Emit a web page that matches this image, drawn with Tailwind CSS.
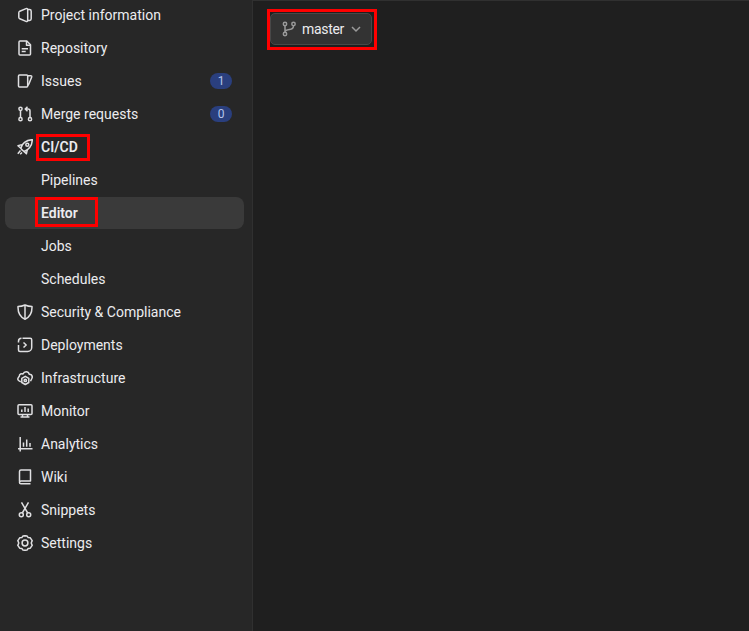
<!doctype html>
<html><head><meta charset="utf-8"><script src="https://cdn.jsdelivr.net/npm/@tailwindcss/browser@4"></script></head>
<body class="m-0 bg-[#1f1f1f]">
<div class="relative flex h-[631px] w-[749px] overflow-hidden bg-[#1f1f1f] font-['Roboto',sans-serif] text-[14px] text-[#ececef]">
<aside class="h-full w-[253px] shrink-0 border-r border-[#303030] bg-[#272727]">
<nav class="-mt-px flex flex-col gap-px pl-[5px] pr-2">
<a class="flex h-8 items-center rounded-lg pl-[12px] pr-3"><svg class="mr-[8px] h-4 w-4 shrink-0" viewBox="0 0 16 16" fill="none" stroke="#e0e0e2" stroke-width="1.5" stroke-linejoin="round"><path d="M2.800 4.200 9 1.600c.9-.4 1.700.2 1.700 1.100v10.600c0 .9-.8 1.500-1.700 1.100l-6.200-2.600c-.6-.3-1-.8-1-1.500V5.700c0-.7.4-1.200 1-1.500Z"/><path d="M10.700 2.500h1.800c1 0 1.700.7 1.700 1.700v7.600c0 1-.7 1.700-1.700 1.700h-1.800"/></svg>Project information</a>
<a class="flex h-8 items-center rounded-lg pl-[12px] pr-3"><svg class="mr-[8px] h-4 w-4 shrink-0" viewBox="0 0 16 16" fill="none" stroke="#e0e0e2" stroke-width="1.5" stroke-linejoin="round"><path d="M3 1h6.800l3.700 3.700V14c0 .6-.4 1-1 1H3c-.6 0-1-.4-1-1V2c0-.6.4-1 1-1Z"/><path d="M9.500 1v4.200h4M4.700 8.700h6.300M4.700 11.500h4"/></svg>Repository</a>
<a class="flex h-8 items-center rounded-lg pl-[12px] pr-3"><svg class="mr-[8px] h-4 w-4 shrink-0" viewBox="0 0 16 16" fill="none" stroke="#e0e0e2" stroke-width="1.5" stroke-linejoin="round"><path d="M2.500 2h7.200c.6 0 1 .4 1 1v10c0 .6-.4 1-1 1H2.500c-.6 0-1-.4-1-1V3c0-.6.4-1 1-1Z"/><path d="M10.700 2.700h3c.7 0 1.200.6 1 1.300L12 10.700l-1.300 1.800"/></svg><span class="grow">Issues</span><span class="flex h-4 w-[22px] items-center justify-center rounded-full bg-[#2a3f7e] text-[12px] leading-none text-[#b5c6ec]">1</span></a>
<a class="flex h-8 items-center rounded-lg pl-[12px] pr-3"><svg class="mr-[8px] h-4 w-4 shrink-0" viewBox="0 0 16 16" fill="none" stroke="#e0e0e2" stroke-width="1.5"><circle cx="3.500" cy="2.800" r="1.600"/><circle cx="3.500" cy="13.200" r="1.600"/><circle cx="13" cy="13.200" r="1.600"/><path d="M3.500 4.500v7M13 11.500V5c0-1.200-.7-2-2-2H8.500M10.500 .8 8.300 3l2.200 2.200"/></svg><span class="grow">Merge requests</span><span class="flex h-4 w-[22px] items-center justify-center rounded-full bg-[#2a3f7e] text-[12px] leading-none text-[#b5c6ec]">0</span></a>
<a class="flex h-8 items-center rounded-lg pl-[12px] pr-3 font-semibold"><svg class="mr-[8px] h-4 w-4 shrink-0" viewBox="0 0 16 16" fill="none" stroke="#e0e0e2" stroke-width="1.5" stroke-linejoin="round"><path d="M5.300 11.200 3.800 9.300C4.500 4.800 9.200.9 15.300.7c-.1 6.200-4.100 10.800-8.300 11.700Z"/><circle cx="10.300" cy="5.800" r="1.500"/><path d="M4.800 5.600 1 6.700l2.800 2.600M10.200 11l-.8 3.800-2.400-2.400M3.500 11.500 .8 14.800M5 13.500l-1.800 1.800"/></svg>CI/CD</a>
<a class="flex h-8 items-center rounded-lg pl-[36px] pr-3">Pipelines</a>
<a class="flex h-8 items-center rounded-lg bg-[#3a3a3a] pl-[36px] pr-3 font-semibold">Editor</a>
<a class="flex h-8 items-center rounded-lg pl-[36px] pr-3">Jobs</a>
<a class="flex h-8 items-center rounded-lg pl-[36px] pr-3">Schedules</a>
<a class="flex h-8 items-center rounded-lg pl-[12px] pr-3"><svg class="mr-[8px] h-4 w-4 shrink-0" viewBox="0 0 16 16" fill="none" stroke="#e0e0e2" stroke-width="1.5" stroke-linejoin="round"><path d="M8 1c2.200 1 4.500 1.500 7 1.500.2 6.200-2 10.500-7 12.700C3 13 .8 8.700 1 2.500 3.500 2.500 5.800 2 8 1Z"/><path d="M8 1.500v13.200"/></svg>Security &amp; Compliance</a>
<a class="flex h-8 items-center rounded-lg pl-[12px] pr-3"><svg class="mr-[8px] h-4 w-4 shrink-0" viewBox="0 0 16 16" fill="none" stroke="#e0e0e2" stroke-width="1.5" stroke-linejoin="round"><path d="M5.500 1.300h7.700c.8 0 1.500.7 1.500 1.500v7.700c0 2.200-1.800 4-4 4H3c-.9 0-1.500-.7-1.500-1.500V8"/><path d="M1.500 5.500V4.300c0-1.700 1.300-3 3-3M6.500 5.500 9.200 8l-2.700 2.500"/></svg>Deployments</a>
<a class="flex h-8 items-center rounded-lg pl-[12px] pr-3"><svg class="mr-[8px] h-4 w-4 shrink-0" viewBox="0 0 16 16" fill="none" stroke="#e0e0e2" stroke-width="1.5" stroke-linejoin="round"><path d="M3.800 11.800C1.500 11 0 9.500 1.300 7.600l1-1.300C2.300 4 4.500 3.300 6 4c1.200-3 5.300-3 6.300.2 1.700 0 3 1.200 3 3l-.6 1.500-1.200 2.500"/><path d="M8.300 6.300l3.500 2v4.200l-3.500 2-3.500-2V8.300Z"/><circle cx="8.300" cy="10.400" r="1.200"/></svg>Infrastructure</a>
<a class="flex h-8 items-center rounded-lg pl-[12px] pr-3"><svg class="mr-[8px] h-4 w-4 shrink-0" viewBox="0 0 16 16" fill="none" stroke="#e0e0e2" stroke-width="1.5"><rect x="1" y="1.700" width="14" height="9.800" rx="1"/><path d="M5.500 11.500v2.500M10.500 11.500v2.500M3.500 14h9M4.800 9V6.500M8 9V4M11.200 9V5.500"/></svg>Monitor</a>
<a class="flex h-8 items-center rounded-lg pl-[12px] pr-3"><svg class="mr-[8px] h-4 w-4 shrink-0" viewBox="0 0 16 16" fill="none" stroke="#e0e0e2" stroke-width="1.5"><path d="M3.200 1v14.500M1 12.700H15.500M6.500 10.700V6.500M9.700 10.700V3.500M13 10.700V7"/></svg>Analytics</a>
<a class="flex h-8 items-center rounded-lg pl-[12px] pr-3"><svg class="mr-[8px] h-4 w-4 shrink-0" viewBox="0 0 16 16" fill="none" stroke="#e0e0e2" stroke-width="1.5" stroke-linejoin="round"><path d="M2.500 12.500V2.500c0-.8.7-1.500 1.500-1.500h9.500v11H4c-.8 0-1.500.6-1.500 1.400s.7 1.400 1.500 1.400h9.500"/></svg>Wiki</a>
<a class="flex h-8 items-center rounded-lg pl-[12px] pr-3"><svg class="mr-[8px] h-4 w-4 shrink-0" viewBox="0 0 16 16" fill="none" stroke="#e0e0e2" stroke-width="1.5"><circle cx="4.300" cy="12.800" r="2"/><circle cx="11.700" cy="12.800" r="2"/><path d="M5.300 11 11.500 .4M10.700 11 4.500 .4"/></svg>Snippets</a>
<a class="flex h-8 items-center rounded-lg pl-[12px] pr-3"><svg class="mr-[8px] h-4 w-4 shrink-0" viewBox="0 0 16 16" fill="none" stroke="#e0e0e2" stroke-width="1.5" stroke-linejoin="round"><path d="M6 .9 8 .7l2 .2 1.200 1.700 2.100.2 1.900 2.800-1 2.400 1 2.400-1.900 2.800-2.100.2-1.200 1.700-2 .2-2-.2-1.200-1.700-2.100-.2L.8 10.400l1-2.400-1-2.400 1.900-2.800 2.100-.2Z"/><circle cx="8" cy="8" r="2.900"/></svg>Settings</a>
</nav>
</aside>
<main class="grow border-t border-[#303030] pl-[17px] pt-3">
<button class="flex h-[32px] w-[102px] items-center rounded-[5px] border border-[#484848] bg-[#333333] pl-[10px] text-[14px] tracking-[-0.3px] leading-none text-[#ececef]"><svg class="h-4 w-4 shrink-0" viewBox="0 0 16 16" fill="none" stroke="#9a9a9a" stroke-width="1.5"><circle cx="4" cy="3" r="1.700"/><circle cx="4" cy="13" r="1.700"/><circle cx="12.500" cy="3" r="1.700"/><path d="M4 4.700v6.600M12.500 4.700c0 2.500-2 3.600-4 3.800-2 .2-4.500 .7-4.500 2.500"/></svg><span class="ml-[5px]">master</span><svg class="ml-[6px] h-3 w-3" viewBox="0 0 12 12" fill="none" stroke="#9a9a9a" stroke-width="1.5"><path d="M2 4 6 8l4-4"/></svg></button>
</main>
<div class="absolute left-[36px] top-[134px] h-[27px] w-[54px] border-[3px] border-[#ff0000]"></div>
<div class="absolute left-[35px] top-[197px] h-[30px] w-[63px] border-[3px] border-[#ff0000]"></div>
<div class="absolute left-[267px] top-[9px] h-[41px] w-[110px] border-[3px] border-[#ff0000]"></div>
</div>
</body></html>
